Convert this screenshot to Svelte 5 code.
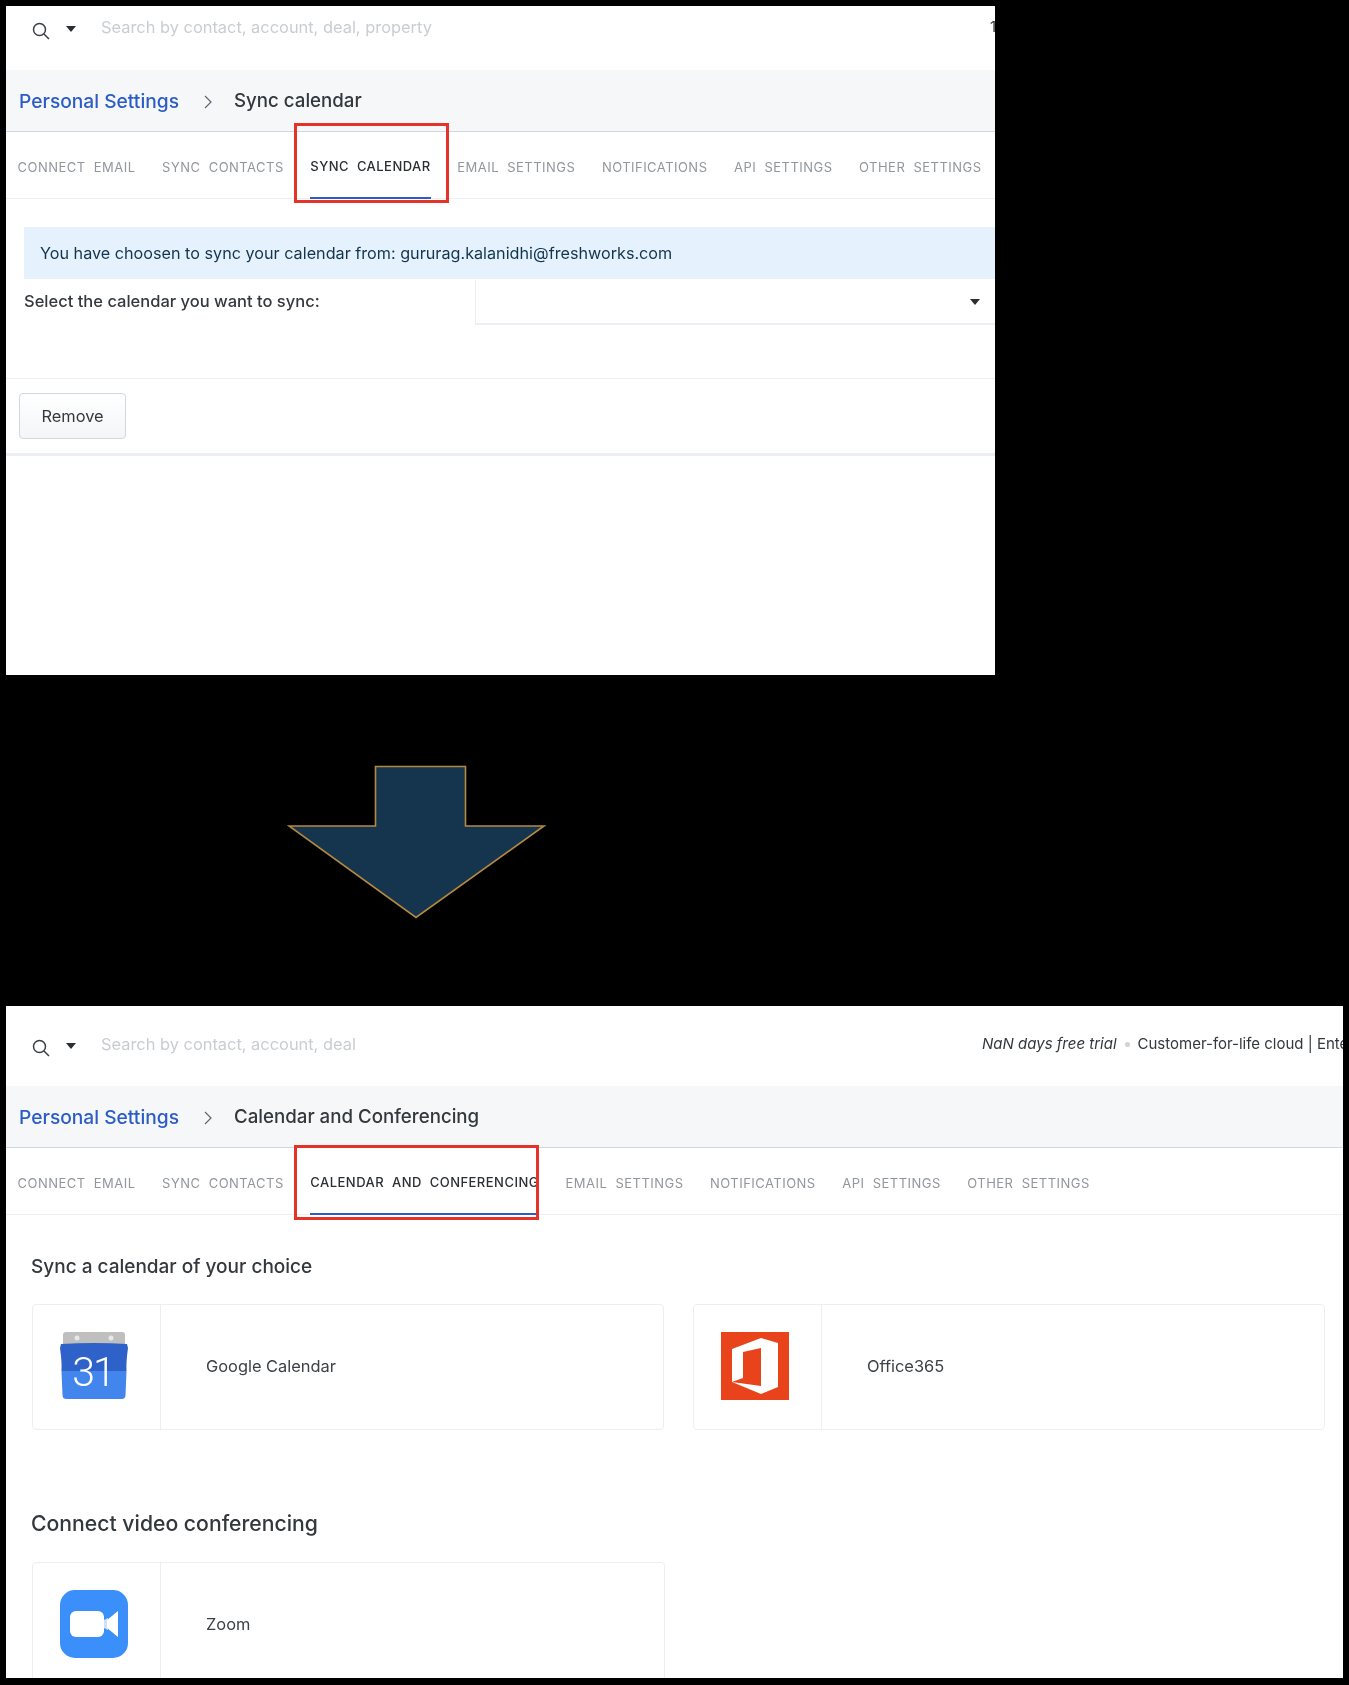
<script>
  const before = ['Connect  Email', 'Sync  Contacts', 'Sync  Calendar', 'Email  Settings', 'Notifications', 'API  Settings', 'Other  Settings'];
  const after = ['Connect  Email', 'Sync  Contacts', 'Calendar  and  Conferencing', 'Email  Settings', 'Notifications', 'API  Settings', 'Other  Settings'];
</script>

{#snippet search(placeholder)}
  <div class="search">
    <svg class="glass" viewBox="0 0 18 18" width="18" height="18" fill="none" stroke="#3b3f44" stroke-width="1.5">
      <circle cx="7.5" cy="7.5" r="6"></circle>
      <path d="M12 12l5 5"></path>
    </svg>
    <span class="caret"></span>
    <span class="placeholder">{placeholder}</span>
  </div>
{/snippet}

{#snippet tabs(items, activeIndex)}
  <nav class="tabs">
    {#each items as tab, i}
      <div class="tab" class:active={i === activeIndex}>
        <span>{tab}</span>
        {#if i === activeIndex}<div class="callout"></div>{/if}
      </div>
    {/each}
  </nav>
{/snippet}

<main class="page">
  <section class="panel first">
    <header class="top">
      {@render search('Search by contact, account, deal, property')}
      <span class="trial">14 days free trial</span>
    </header>
    <div class="crumbs">
      <a href="#settings">Personal Settings</a>
      <svg viewBox="0 0 10 14" width="10" height="14" fill="none" stroke="#5d6772" stroke-width="1.2"><path d="M2 1l6 6-6 6"></path></svg>
      <strong>Sync calendar</strong>
    </div>
    {@render tabs(before, 2)}

    <div class="sync-body">
      <div class="alert">You have choosen to sync your calendar from: gururag.kalanidhi@freshworks.com</div>
      <div class="select-row">
        <span class="select-label">Select the calendar you want to sync:</span>
        <div class="select"><span class="caret"></span></div>
      </div>
    </div>
    <div class="actions">
      <button>Remove</button>
    </div>
  </section>

  <svg class="arrow" viewBox="0 0 260 154" width="260" height="154">
    <path d="M88.500 1.500H178.500V61H257L129 152.500L2 61H88.500Z" fill="#15344d" stroke="#b5893f" stroke-width="1.600"></path>
  </svg>

  <section class="panel second">
    <header class="top">
      {@render search('Search by contact, account, deal')}
      <span class="trial"><em>NaN days free trial</em><i class="dot"></i>Customer-for-life cloud | Enterprise</span>
    </header>
    <div class="crumbs">
      <a href="#settings">Personal Settings</a>
      <svg viewBox="0 0 10 14" width="10" height="14" fill="none" stroke="#5d6772" stroke-width="1.2"><path d="M2 1l6 6-6 6"></path></svg>
      <strong>Calendar and Conferencing</strong>
    </div>
    {@render tabs(after, 2)}

    <div class="content">
      <h2>Sync a calendar of your choice</h2>
      <div class="cards">
        <div class="card">
          <div class="logo">
            <svg viewBox="0 0 68 68" width="68" height="68">
              <path d="M3 3a3 3 0 0 1 3-3h56a3 3 0 0 1 3 3V14H3Z" fill="#bfbfbf"></path>
              <circle cx="17" cy="6" r="2.500" fill="#e8e8e8"></circle>
              <circle cx="51" cy="6" r="2.500" fill="#e8e8e8"></circle>
              <path d="M1 12Q34 10 67 12L68 16Q66 30 66.500 39H1.500Q2 30 0 16Z" fill="#2f62c9"></path>
              <path d="M1.500 39H66.500L65.500 63a4 4 0 0 1-4 4H6.500a4 4 0 0 1-4-4Z" fill="#4285ed"></path>
              <text x="33" y="54" text-anchor="middle" class="date">31</text>
            </svg>
          </div>
          <span class="name">Google Calendar</span>
        </div>
        <div class="card">
          <div class="logo">
            <svg viewBox="0 0 68 68" width="68" height="68">
              <rect width="68" height="68" fill="#e9431b"></rect>
              <path fill-rule="evenodd" d="M40 6L57 11V55L40 62L11 50V17ZM40 16L22 20V46L11 50L40 54Z" fill="#fff"></path>
            </svg>
          </div>
          <span class="name">Office365</span>
        </div>
      </div>

      <h2 class="video">Connect video conferencing</h2>
      <div class="cards">
        <div class="card">
          <div class="logo">
            <svg viewBox="0 0 68 68" width="68" height="68">
              <rect width="68" height="68" rx="15" fill="#3b8ffa"></rect>
              <rect x="10" y="21" width="34" height="26" rx="6" fill="#fff"></rect>
              <path d="M44 30L48 28V40L44 38Z" fill="#cfe3fd"></path>
              <path d="M47 30L58 21V47L47 38Z" fill="#fff"></path>
            </svg>
          </div>
          <span class="name">Zoom</span>
        </div>
        <div class="card-spacer"></div>
      </div>
    </div>
  </section>
</main>

<style>
  :global(body) {
    background: #000;
  }

  .page {
    height: 1685px;
    overflow: hidden;
    padding-top: 6px;
    box-sizing: border-box;
    font-family: Inter, "Liberation Sans", sans-serif;
    color: #2a2f34;
  }

  .panel {
    margin-left: 6px;
    background: #fff;
    overflow: hidden;
    filter: blur(0.35px);
  }

  .first {
    width: 989px;
    height: 669px;
  }

  .second {
    width: 1337px;
    height: 672px;
  }

  .arrow {
    display: block;
    margin: 90px 0 87px 287px;
  }

  .top {
    display: flex;
    white-space: nowrap;
    height: 64px;
    padding-top: 11px;
    box-sizing: border-box;
  }

  .second .top {
    height: 80px;
    padding-top: 28px;
  }

  .search {
    display: flex;
    align-items: center;
    flex: none;
    height: 20px;
    padding-left: 26px;
  }

  .first .search {
    width: 958px;
  }

  .second .search {
    width: 950px;
  }

  .glass {
    margin-top: 8px;
  }

  .caret {
    display: inline-block;
    width: 0;
    height: 0;
    border-left: 5px solid transparent;
    border-right: 5px solid transparent;
    border-top: 6px solid #2a2f34;
  }

  .search .caret {
    margin-left: 16px;
    margin-top: 4px;
  }

  .placeholder {
    margin-left: 25px;
    font-size: 16.400px;
    color: #c9cdd1;
  }

  .trial {
    flex: none;
    font-size: 15px;
    line-height: 20px;
    color: #33383d;
  }

  .trial em {
    font-style: italic;
  }

  .dot {
    display: inline-block;
    width: 5px;
    height: 5px;
    margin: 0 8px;
    border-radius: 50%;
    background: #cfd3d7;
    vertical-align: 2px;
  }

  .crumbs {
    display: flex;
    align-items: center;
    height: 62px;
    padding-left: 13px;
    box-sizing: border-box;
    background: #f5f7f9;
    border-bottom: 1px solid #cfd7df;
  }

  .crumbs a {
    font-size: 19.200px;
    font-weight: 500;
    color: #2c5cc5;
    text-decoration: none;
  }

  .crumbs svg {
    margin: 2px 0 0 24px;
  }

  .crumbs strong {
    margin-left: 21px;
    font-size: 18.700px;
    font-weight: 500;
    color: #33383d;
  }

  .tabs {
    display: flex;
    gap: 26.600px;
    height: 67px;
    padding-left: 11.500px;
    box-sizing: border-box;
    border-bottom: 1px solid #ebeff3;
  }

  .tab {
    position: relative;
    display: flex;
    align-items: center;
    height: 67px;
    padding-top: 3px;
    box-sizing: border-box;
    font-size: 13px;
    text-transform: uppercase;
    letter-spacing: 0.47px;
    white-space: pre;
    color: #92979d;
  }

  .tab.active {
    color: #2a2f34;
    font-weight: 500;
    border-bottom: 2px solid #2c5cc5;
  }

  .callout {
    position: absolute;
    left: -16px;
    right: -18px;
    top: -9px;
    bottom: -6px;
    border: 3px solid #e53329;
  }

  .second .callout {
    top: -3px;
    right: 0;
    bottom: -7px;
  }

  .sync-body {
    padding: 28px 0 0 18px;
    height: 180px;
    box-sizing: border-box;
    border-bottom: 1px solid #ebeff3;
  }

  .alert {
    width: 1000px;
    height: 52px;
    display: flex;
    align-items: center;
    padding-left: 16px;
    font-size: 16.200px;
    color: #12344d;
    background: #e5f2fd;
  }

  .select-row {
    display: flex;
    align-items: flex-start;
    margin-top: 1px;
  }

  .select-label {
    width: 451px;
    flex: none;
    padding-top: 11px;
    font-size: 16.500px;
    font-weight: 500;
    color: #33383d;
  }

  .select {
    width: 600px;
    flex: none;
    height: 45px;
    padding: 0 0 0 494px;
    box-sizing: border-box;
    display: flex;
    align-items: center;
    border-left: 1px solid #ebeff3;
    border-bottom: 2px solid #ebeff3;
  }

  .actions {
    height: 77px;
    padding: 14px 0 0 13px;
    box-sizing: border-box;
    border-bottom: 3px solid #ebeff3;
  }

  button {
    width: 107px;
    height: 46px;
    font: inherit;
    font-size: 16.400px;
    color: #33383d;
    background: linear-gradient(#fff, #f3f5f7);
    border: 1px solid #cfd7df;
    border-radius: 4px;
  }

  .content {
    padding: 40px 18px 0 26px;
  }

  h2 {
    margin: 0 0 25px -1px;
    font-size: 19px;
    line-height: 24px;
    font-weight: 500;
    color: #33383d;
  }

  h2.video {
    margin-top: 81px;
    margin-bottom: 27px;
    font-size: 21.200px;
  }

  .cards {
    display: flex;
    gap: 29px;
  }

  .card {
    flex: 1;
    display: flex;
    align-items: center;
    height: 126px;
    border: 1px solid #ebeff3;
    border-radius: 4px;
    box-sizing: border-box;
  }

  .card-spacer {
    flex: 1;
  }

  .logo {
    display: flex;
    align-items: center;
    justify-content: center;
    width: 128px;
    height: 100%;
    padding: 0 6px 3px 0;
    box-sizing: border-box;
    flex: none;
    border-right: 1px solid #ebeff3;
  }

  .logo svg {
    display: block;
  }

  .date {
    font-size: 41px;
    font-weight: 300;
    letter-spacing: -2px;
    font-family: Roboto, sans-serif;
    fill: #fff;
  }

  .name {
    margin: 0 0 3px 45px;
    font-size: 16.400px;
    color: #3c4146;
  }
</style>
